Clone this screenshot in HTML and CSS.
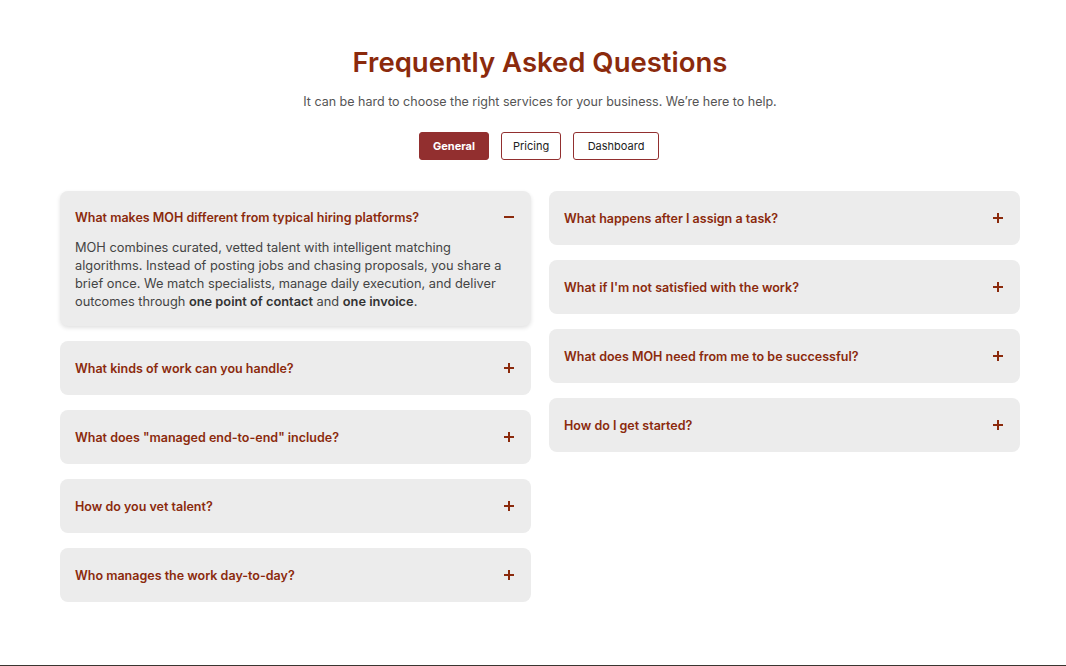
FILE: index.html
```html
<!DOCTYPE html>
<html lang="en">
<head>
<meta charset="utf-8">
<title>FAQ</title>
<link rel="stylesheet" href="styles.css">
</head>
<body>
<main class="faq">
  <h1 class="faq-title">Frequently Asked Questions</h1>
  <p class="faq-sub">It can be hard to choose the right services for your business. We’re here to help.</p>
  <div class="tabs">
    <button class="tab active">General</button>
    <button class="tab slim">Pricing</button>
    <button class="tab wide">Dashboard</button>
  </div>
  <div class="cols">
    <div class="col">
      <div class="item open">
        <div class="q"><span>What makes MOH different from typical hiring platforms?</span><span class="icon minus"></span></div>
        <p class="a">MOH combines curated, vetted talent with intelligent matching algorithms. Instead of posting jobs and chasing proposals, you share a brief once. We match specialists, manage daily execution, and deliver outcomes through <b>one point of contact</b> and <b>one invoice</b>.</p>
      </div>
      <div class="item"><div class="q"><span>What kinds of work can you handle?</span><span class="icon plus"></span></div></div>
      <div class="item"><div class="q"><span>What does "managed end-to-end" include?</span><span class="icon plus"></span></div></div>
      <div class="item"><div class="q"><span>How do you vet talent?</span><span class="icon plus"></span></div></div>
      <div class="item"><div class="q"><span>Who manages the work day-to-day?</span><span class="icon plus"></span></div></div>
    </div>
    <div class="col">
      <div class="item"><div class="q"><span>What happens after I assign a task?</span><span class="icon plus"></span></div></div>
      <div class="item"><div class="q"><span>What if I'm not satisfied with the work?</span><span class="icon plus"></span></div></div>
      <div class="item"><div class="q"><span>What does MOH need from me to be successful?</span><span class="icon plus"></span></div></div>
      <div class="item"><div class="q"><span>How do I get started?</span><span class="icon plus"></span></div></div>
    </div>
  </div>
</main>
<footer class="footer"></footer>
</body>
</html>
```

FILE: styles.css
```css
* { box-sizing: border-box; }
html, body { margin: 0; padding: 0; background: #fff; }
body {
  font-family: Inter, "Open Sans", sans-serif;
  color: #444;
}
.faq {
  width: 960px;
  margin: 0 0 0 60px;
  padding-top: 44px;
  height: 665px;
}
.faq-title {
  margin: 0;
  text-align: center;
  font-size: 27.5px;
  line-height: 36px;
  font-weight: 600;
  color: #8b2a0c;
}
.faq-sub {
  margin: 13px 0 0;
  text-align: center;
  font-size: 12.5px;
  line-height: 18px;
  color: #555;
}
.tabs {
  display: flex;
  justify-content: center;
  gap: 12px;
  margin-top: 21px;
  padding-right: 2px;
}
.tab {
  font-family: inherit;
  height: 28px;
  padding: 0 12px;
  font-size: 11px;
  background: #fff;
  border: 1px solid #922f2f;
  border-radius: 3px;
  color: #222;
  cursor: pointer;
}
.tab.slim { padding: 0 11px; }
.tab.wide { padding: 0 13.5px; }
.tab.active {
  background: #922f2f;
  color: #fff;
  font-weight: 700;
  padding: 0 13px;
}
.cols {
  display: flex;
  gap: 18px;
  margin-top: 31px;
  align-items: flex-start;
}
.col {
  flex: 1;
  display: flex;
  flex-direction: column;
  gap: 15px;
}
.item {
  background: #ececec;
  border-radius: 8px;
}
.item.open {
  box-shadow: 0 2px 4px rgba(0,0,0,0.12);
  padding-bottom: 15px;
}
.q {
  height: 54px;
  display: flex;
  align-items: center;
  justify-content: space-between;
  padding: 0 17px 0 15px;
  font-size: 12.5px;
  font-weight: 600;
  color: #8b2a0c;
}
.item.open .q { height: 52px; }
.icon {
  position: relative;
  width: 10px;
  height: 10px;
  flex: none;
}
.icon::before, .plus::after {
  content: "";
  position: absolute;
  background: #8b2a0c;
}
.icon::before { left: 0; right: 0; top: 4px; height: 2px; }
.plus::after { top: 0; bottom: 0; left: 4px; width: 2px; }
.a {
  margin: -4px 0 0;
  padding: 0 15px;
  font-size: 12.8px;
  line-height: 18px;
  color: #444;
}
.a b { color: #333; font-weight: 600; }
.footer {
  height: 1px;
  background: #3a3530;
}
```
